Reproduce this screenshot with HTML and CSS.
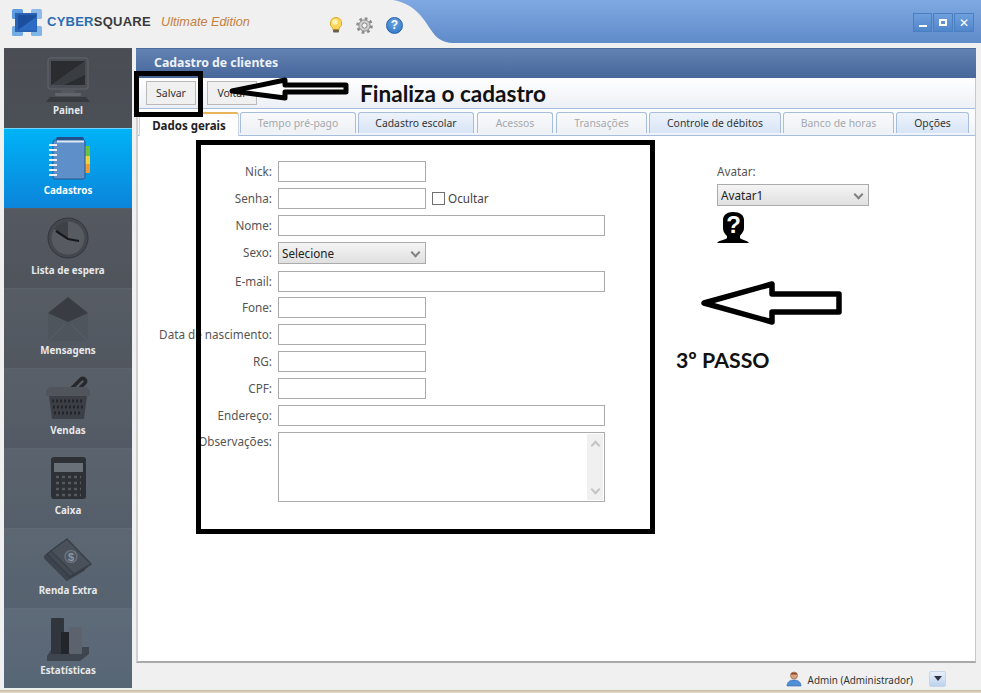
FILE: index.html
```html
<!DOCTYPE html>
<html lang="pt">
<head>
<meta charset="utf-8">
<title>CyberSquare</title>
<link rel="stylesheet" href="styles.css">
</head>
<body>
<div class="app">
  <header class="header">
    <div class="brand">
      <svg class="logo" viewBox="0 0 30 27" width="30" height="27">
        <rect x="0" y="0" width="11" height="10" rx="1.500" fill="#5c9be0"/>
        <rect x="19" y="0" width="11" height="10" rx="1.500" fill="#8dbbe8"/>
        <rect x="0" y="17" width="11" height="10" rx="1.500" fill="#72ace4"/>
        <rect x="19" y="17" width="11" height="10" rx="1.500" fill="#7fb4e6"/>
        <rect x="3" y="4" width="22" height="19" fill="#2a62b4"/>
        <rect x="6" y="6" width="18" height="15" fill="#1c4f9e"/>
        <path d="M6 21L24 8v13z" fill="#2d6cc4"/>
      </svg>
      <span class="brand-name"><span class="brand-blue">CYBER</span>SQUARE</span>
      <span class="edition">Ultimate Edition</span>
    </div>
    <div class="tools">
      <svg viewBox="0 0 16 16" width="16" height="16">
        <path d="M8 .5a5.800 5.800 0 0 1 3.200 10.600V12.500H4.800v-1.400A5.800 5.800 0 0 1 8 .5z" fill="#fcd658" stroke="#e0ac30"/>
        <circle cx="7" cy="5" r="2.800" fill="#fff3b4"/>
        <rect x="5" y="12.500" width="6" height="3" rx="1" fill="#6b5f48"/>
      </svg>
      <svg viewBox="0 0 17 17" width="17" height="17">
        <circle cx="8.500" cy="8.500" r="7" fill="none" stroke="#8c8c8c" stroke-width="2.600" stroke-dasharray="2.750 2.750"/>
        <circle cx="8.500" cy="8.500" r="5.600" fill="#cfcfcf" stroke="#8a8a8a"/>
        <circle cx="8.500" cy="8.500" r="2.600" fill="#f2f2f2" stroke="#8a8a8a"/>
      </svg>
      <span class="help">?</span>
    </div>
    <svg class="wave" viewBox="0 0 60 43" width="60" height="43" preserveAspectRatio="none">
      <defs>
        <linearGradient id="waveFill" x1="0" y1="0" x2="0" y2="1">
          <stop offset="0" stop-color="#7fa9e2"/>
          <stop offset="1" stop-color="#5f8bc9"/>
        </linearGradient>
      </defs>
      <path d="M0 0 C22 4 30 18 38 30 C43 38 50 43 60 43 L60 0 Z" fill="url(#waveFill)"/>
    </svg>
    <div class="titlebar">
      <div class="window-buttons">
        <span class="win-btn win-first"><span class="win-min"></span></span>
        <span class="win-btn"><span class="win-max"></span></span>
        <span class="win-btn win-close">✕</span>
      </div>
    </div>
  </header>

  <div class="body">
    <nav class="sidebar">
      <a class="nav-item">
        <svg class="nav-icon" viewBox="0 0 48 48">
          <rect x="4" y="2" width="40" height="31" rx="2" fill="#4b4f55" stroke="#62666c"/>
          <rect x="7" y="5" width="34" height="24" fill="#2a2c30"/>
          <path d="M41 5v14L20 29H7z" fill="#3f4348" opacity=".8"/>
          <rect x="17" y="33" width="14" height="5" fill="#55595f"/>
          <rect x="11" y="37" width="26" height="3" rx="1" fill="#62666c"/>
          <path d="M6 41h36l4 5H2z" fill="#373a3f"/>
        </svg>
        <span>Painel</span>
      </a>
      <a class="nav-item nav-active">
        <svg class="nav-icon" viewBox="0 0 48 48">
          <rect x="40" y="10" width="6" height="10" fill="#6ec13c"/>
          <rect x="40" y="20" width="6" height="8" fill="#eed23c"/>
          <rect x="40" y="28" width="6" height="9" fill="#ef9c33"/>
          <rect x="12" y="1" width="28" height="6" rx="2" fill="#1e4e8c"/>
          <rect x="9" y="4" width="32" height="39" rx="2" fill="#5f8fc8" stroke="#27588f"/>
          <rect x="13" y="4.500" width="27" height="2" fill="#dbe8f6"/>
          <path d="M5 9h8M5 14h8M5 19h8M5 24h8M5 29h8M5 34h8M5 39h8" fill="none" stroke="#e8eef5" stroke-width="2.200"/>
        </svg>
        <span>Cadastros</span>
      </a>
      <a class="nav-item">
        <svg class="nav-icon" viewBox="0 0 48 48">
          <circle cx="24" cy="22" r="20" fill="#44484e" stroke="#33363b"/>
          <circle cx="24" cy="22" r="16.500" fill="#565b62"/>
          <path d="M24 22V5.500A16.500 16.500 0 0 0 10 13z" fill="#3e4247"/>
          <path d="M12 15L24 23l11 2" fill="none" stroke="#17181a" stroke-width="2.200"/>
        </svg>
        <span>Lista de espera</span>
      </a>
      <a class="nav-item">
        <svg class="nav-icon" viewBox="0 0 48 48">
          <path d="M4 17L24 26l20-9v28H4z" fill="#4f555d"/>
          <path d="M4 17L24 1l20 16-20 9z" fill="#393d43"/>
          <path d="M4 45L21 28M44 45L27 28" fill="none" stroke="#5a6068" stroke-width="1"/>
        </svg>
        <span>Mensagens</span>
      </a>
      <a class="nav-item">
        <svg class="nav-icon" viewBox="0 0 48 48">
          <path d="M24 16L37 3c2-2 6 1 4 4L31 17" fill="none" stroke="#26282c" stroke-width="3.500"/>
          <path d="M2 14L6 11H42L46 14V20H2z" fill="#50555c"/>
          <path d="M5 20H43L40 43H8z" fill="#3c4046"/>
          <path d="M8 25h32M9 31h30M10 37h28" stroke="#23262a" stroke-width="3" stroke-dasharray="2 2" fill="none"/>
        </svg>
        <span>Vendas</span>
      </a>
      <a class="nav-item">
        <svg class="nav-icon" viewBox="0 0 48 48">
          <rect x="7" y="1" width="35" height="42" rx="3" fill="#2d3035"/>
          <rect x="10" y="7" width="29" height="9" fill="#6a7078"/>
          <path d="M12 21h25M12 27h25M12 33h25M12 39h25" stroke="#555a61" stroke-width="2.500" stroke-dasharray="3 3"/>
        </svg>
        <span>Caixa</span>
      </a>
      <a class="nav-item">
        <svg class="nav-icon" viewBox="0 0 48 48">
          <path d="M16 9L40 34 23 44 0 21z" fill="#3d444d" stroke="#3d444d" stroke-width="2" stroke-linejoin="round"/>
          <path d="M19 6L43 31 26 41 3 18z" fill="#434a53" stroke="#363c44" stroke-width="1.500" stroke-linejoin="round"/>
          <path d="M23 3L47 28 30 38 7 15z" fill="#4a515b" stroke="#3a4048" stroke-width="1.500" stroke-linejoin="round"/>
          <circle cx="27" cy="20.500" r="6" fill="#4f5761" stroke="#6f7782" stroke-width="1.200"/>
          <text x="27" y="24.500" class="money-sign">$</text>
        </svg>
        <span>Renda Extra</span>
      </a>
      <a class="nav-item">
        <svg class="nav-icon" viewBox="0 0 48 48">
          <path d="M9 31H45V38L36 45H3V40z" fill="#3e454e"/>
          <rect x="7" y="2" width="13" height="36" rx="1" fill="#31363c"/>
          <rect x="17" y="16" width="9" height="22" fill="#22252a"/>
          <rect x="25" y="11" width="13" height="27" rx="1" fill="#5c636c"/>
        </svg>
        <span>Estatísticas</span>
      </a>
    </nav>

    <main class="main">
      <div class="panel">
        <h1 class="panel-title">Cadastro de clientes</h1>
        <div class="toolbar">
          <button class="btn" type="button">Salvar</button>
          <button class="btn" type="button">Voltar</button>
        </div>
        <div class="tabs">
          <span class="tab tab-active tab-w1">Dados gerais</span>
          <span class="tab tab-off tab-w2">Tempo pré-pago</span>
          <span class="tab tab-w3">Cadastro escolar</span>
          <span class="tab tab-off tab-w4">Acessos</span>
          <span class="tab tab-off tab-w5">Transações</span>
          <span class="tab tab-w6">Controle de débitos</span>
          <span class="tab tab-off tab-w7">Banco de horas</span>
          <span class="tab tab-w8">Opções</span>
        </div>
        <div class="content">
          <form class="form">
            <div class="row"><label>Nick:</label><input class="short" type="text"></div>
            <div class="row"><label>Senha:</label><input class="short" type="text"><input class="check" type="checkbox"><span class="check-label">Ocultar</span></div>
            <div class="row"><label>Nome:</label><input class="wide" type="text"></div>
            <div class="row row-tall"><label>Sexo:</label><span class="select-wrap select-short"><select><option>Selecione</option></select></span></div>
            <div class="row row-short"><label>E-mail:</label><input class="wide" type="text"></div>
            <div class="row"><label>Fone:</label><input class="short" type="text"></div>
            <div class="row"><label>Data de nascimento:</label><input class="short" type="text"></div>
            <div class="row"><label>RG:</label><input class="short" type="text"></div>
            <div class="row"><label>CPF:</label><input class="short" type="text"></div>
            <div class="row"><label>Endereço:</label><input class="wide" type="text"></div>
            <div class="row row-area"><label>Observações:</label>
              <div class="area">
                <textarea></textarea>
                <div class="scroll"><span class="chev chev-up"></span><span class="chev chev-down"></span></div>
              </div>
            </div>
          </form>
          <div class="avatar">
            <div class="avatar-label">Avatar:</div>
            <span class="select-wrap select-avatar"><select><option>Avatar1</option></select></span>
            <svg class="avatar-pic" viewBox="0 0 32 32" width="32" height="32">
              <path d="M6 8C6 3 10 0 16 0 23 0 27 3 27 8V16C27 20 24 22 23 24V26C25 28 30 28 32 31H0C2 28 8 28 10 26V24C8 22 6 20 6 16Z" fill="#000"/>
              <text x="16.500" y="21" class="avatar-q">?</text>
            </svg>
          </div>
        </div>
      </div>
      <div class="status">
        <svg viewBox="0 0 16 16" width="16" height="16">
          <circle cx="8" cy="4.500" r="3.500" fill="#d9a27c" stroke="#8a5a3c" stroke-width=".6"/>
          <path d="M4.500 3.500C5 1 11 1 11.500 3.500z" fill="#8b4a2c"/>
          <path d="M1 15c0-4 3-6 7-6s7 2 7 6z" fill="#4f8fd8" stroke="#2f64a8" stroke-width=".6"/>
        </svg>
        <span class="status-user">Admin (Administrador)</span>
        <span class="status-btn"><span class="status-caret"></span></span>
      </div>
    </main>
  </div>
  <div class="taskbar"></div>

  <div class="mark mark-save"></div>
  <div class="mark mark-form"></div>
  <svg class="arrow arrow-top" viewBox="0 0 124 28" width="124" height="28">
    <path d="M4 16L57 5V10H118V17H57V23Z" fill="#fff" stroke="#000" stroke-width="5" stroke-linejoin="round"/>
  </svg>
  <svg class="arrow arrow-right" viewBox="0 0 146 50" width="146" height="50">
    <path d="M5 25L73 6V16H140V34H73V44Z" fill="#fff" stroke="#000" stroke-width="5.500" stroke-linejoin="round"/>
  </svg>
  <div class="note note-top">Finaliza o cadastro</div>
  <div class="note note-step">3º PASSO</div>
</div>
</body>
</html>
```
FILE: styles.css
```css
* { box-sizing: border-box; }
html, body { margin: 0; padding: 0; }
body { width: 981px; height: 693px; overflow: hidden; background: #f0f0f0; font-family: "Noto Sans", "Open Sans", sans-serif; font-size: 11.700px; color: #444; }
.app { position: relative; display: flex; flex-direction: column; width: 981px; height: 693px; }

.header { display: flex; align-items: stretch; height: 43px; flex: none; }
.brand { display: flex; align-items: center; width: 322px; padding: 0 0 0 12px; flex: none; }
.logo { flex: none; margin-top: 2px; }
.brand-name { margin-left: 5px; font: bold 13px "Liberation Sans", sans-serif; letter-spacing: .25px; color: #3a3a3a; width: 114px; white-space: nowrap; flex: none; }
.brand-blue { color: #2a6db5; }
.edition { font: italic 12.700px "Liberation Sans", sans-serif; color: #c47f3e; white-space: nowrap; }
.tools { position: relative; display: flex; align-items: center; gap: 12px; width: 81px; margin-right: -10px; padding: 7px 0 0 6px; flex: none; }
.tools svg { flex: none; display: block; }
.help { display: block; flex: none; width: 17px; height: 17px; border-radius: 50%; background: radial-gradient(circle at 50% 35%, #6aa8e4, #2a6fc0); border: 1px solid #2a62a8; color: #fff; font: bold 12px/15px "Liberation Sans", sans-serif; text-align: center; margin-left: 1px; }
.wave { flex: none; }
.titlebar { flex: 1; display: flex; justify-content: flex-end; align-items: flex-start; padding: 13px 7px 0 0; background: linear-gradient(#7fa9e2, #5f8bc9); }
.window-buttons { display: flex; gap: 1px; }
.win-btn { display: flex; align-items: center; justify-content: center; width: 20px; height: 19px; background: linear-gradient(#6f9fdc, #5186cc); border: 1px solid #4a7fc2; color: #fff; font: bold 11px/1 "DejaVu Sans", sans-serif; }
.win-first { width: 19px; }
.win-min { display: block; width: 8px; height: 2px; background: #fff; margin-top: 7px; }
.win-max { display: block; width: 8px; height: 7px; border: 2px solid #fff; }
.win-close { font-size: 12px; }

.body { flex: 1; min-height: 0; display: flex; gap: 4px; padding: 5px 5px 0 4px; }

.sidebar { flex: none; width: 128px; height: 640px; background: linear-gradient(#44484e 0, #4e5259 12%, #545a63 50%, #5b6a7a 100%); }
.nav-item { display: flex; flex-direction: column; align-items: center; height: 80px; padding-top: 7px; border-top: 1px solid rgba(255,255,255,.07); background: linear-gradient(rgba(255,255,255,.03), rgba(0,0,0,.04)); font: bold 9.800px/14px "Noto Sans", sans-serif; color: #e6e8ea; }
.nav-icon { display: block; width: 48px; height: 48px; flex: none; }
.nav-active { background: linear-gradient(#00b3f6, #0b84da); color: #fff; border-top: 1px solid #6fd4fa; }
.nav-item span { display: block; }
.money-sign { font: bold 11px "Liberation Sans", sans-serif; fill: #8d959f; text-anchor: middle; }

.main { flex: 1; min-width: 0; display: flex; flex-direction: column; }
.panel { display: flex; flex-direction: column; height: 615px; flex: none; background: #fff; border-bottom: 2px solid #a9a9a9; border-right: 1px solid #c8c8c8; border-left: 2px solid #d0d0d0; }
.panel-title { margin: 0 -1px 0 -2px; height: 30px; flex: none; padding: 7px 0 0 18px; background: linear-gradient(#6383b4, #47679b); color: #eef2f8; font: bold 12.300px/16px "Noto Sans", sans-serif; box-shadow: inset 0 1px 0 #4d6b9c; }
.toolbar { display: flex; align-items: flex-start; gap: 11px; height: 31px; flex: none; padding: 3px 0 0 8px; background: linear-gradient(#fff, #ecf0f6); border-bottom: 1px solid #a6bedb; }
.btn { width: 50px; height: 24px; padding: 0; background: #f0f0f0; border: 1px solid #b9b9b9; color: #333; font: 10.500px "Noto Sans", sans-serif; }
.tabs { display: flex; align-items: flex-end; gap: 2px; height: 27px; flex: none; padding: 0 0 0 1px; background: linear-gradient(#fff, #eef3fa); border-bottom: 1px solid #a6bedb; }
.tab { display: flex; align-items: center; justify-content: center; height: 21px; margin-bottom: 2px; background: linear-gradient(#edf3fb, #d8e5f6); border: 1px solid #a6bedb; border-bottom: 0; border-radius: 3px 3px 0 0; font-size: 10.400px; color: #333; white-space: nowrap; flex: none; }
.tab-off { background: linear-gradient(#f8f9fb, #eef1f5); color: #a4a8ad; }
.tab-active { background: #fff; border-color: #c9d5e4; border-top: 2px solid #e8b45a; font-size: 11.500px; font-weight: bold; color: #222; height: 24px; margin-bottom: -1px; }
.tab-w1 { width: 100px; }
.tab-w2 { width: 116px; margin-left: -1px; }
.tab-w3 { width: 116px; }
.tab-w4 { width: 76px; margin-left: 1px; }
.tab-w5 { width: 91px; margin-left: 1px; }
.tab-w6 { width: 132px; }
.tab-w7 { width: 111px; }
.tab-w8 { width: 73px; }

.content { flex: 1; min-height: 0; display: flex; align-items: flex-start; padding: 25px 0 0 11px; }
.form { flex: none; width: 456px; }
.row { display: flex; align-items: flex-start; height: 27px; }
.row-tall { height: 29px; }
.row-short { height: 26px; }
.row-area { height: 70px; }
.row label { flex: none; width: 123px; margin-right: 6px; padding-top: 2px; text-align: right; line-height: 17px; white-space: nowrap; color: #555; }
.row-area label { padding-top: 1px; }
.row input[type="text"] { height: 21px; padding: 0 3px; background: #fff; border: 1px solid #ababab; border-radius: 0; }
.short { width: 148px; }
.wide { width: 327px; }
.select-wrap { position: relative; display: block; height: 22px; }
.select-wrap select { appearance: none; display: block; width: 100%; height: 22px; padding: 0 0 0 3px; background: linear-gradient(#f4f4f4, #e0e0e0); border: 1px solid #ababab; border-radius: 0; font: 11.700px "Noto Sans", sans-serif; color: #222; }
.select-wrap::after { content: ""; position: absolute; top: 7px; right: 7px; width: 5px; height: 5px; border-right: 2px solid #808080; border-bottom: 2px solid #808080; transform: rotate(45deg); pointer-events: none; }
.select-short { width: 148px; }
.select-avatar { width: 152px; }
.check { appearance: none; width: 13px; height: 13px; margin: 4px 0 0 6px; background: #fff; border: 1px solid #707070; }
.check-label { margin-left: 3px; line-height: 21px; color: #444; }
.area { display: flex; width: 327px; height: 70px; padding: 1px; background: #fff; border: 1px solid #ababab; }
.area textarea { flex: 1; min-width: 0; height: 100%; border: 0; padding: 0; resize: none; outline: 0; background: #fff; }
.scroll { display: flex; flex-direction: column; justify-content: space-between; align-items: center; width: 16px; padding: 8px 0 7px; background: #f0f0f0; }
.chev { display: block; width: 7px; height: 7px; border-left: 2px solid #c4c4c4; border-top: 2px solid #c4c4c4; }
.chev-up { transform: rotate(45deg); }
.chev-down { transform: rotate(225deg); }

.avatar { flex: none; margin-left: 112px; padding-top: 2px; }
.avatar-label { line-height: 17px; color: #555; margin-bottom: 4px; }
.avatar-pic { display: block; margin-top: 6px; }
.avatar-q { font: bold 24px "Liberation Sans", sans-serif; fill: #fff; text-anchor: middle; }

.status { flex: 1; display: flex; align-items: center; padding: 4px 30px 0 0; justify-content: flex-end; background: #f0f0f0; color: #333; }
.status-user { margin: 3px 16px 0 6px; font-size: 9.900px; }
.status-btn { display: flex; align-items: center; justify-content: center; width: 17px; height: 16px; background: linear-gradient(#e8f0fb, #bcd2ee); border: 1px solid #c8d6e8; border-radius: 2px; }
.status-caret { width: 0; height: 0; border: 4px solid transparent; border-top: 5px solid #334; border-bottom: 0; }
.taskbar { flex: none; height: 3px; background: linear-gradient(#c8b898, #e4dfd2); }

.mark { position: absolute; border: 5px solid #000; }
.mark-save { left: 134px; top: 71px; width: 69px; height: 46px; }
.mark-form { left: 196px; top: 140px; width: 459px; height: 394px; }
.arrow { position: absolute; display: block; }
.arrow-top { left: 228px; top: 75px; }
.arrow-right { left: 699px; top: 278px; }
.note { position: absolute; font: bold 22.600px/26px Lato, sans-serif; color: #111; white-space: nowrap; }
.note-top { left: 360px; top: 81px; }
.note-step { left: 676px; top: 347px; font-size: 21.300px; }
```
